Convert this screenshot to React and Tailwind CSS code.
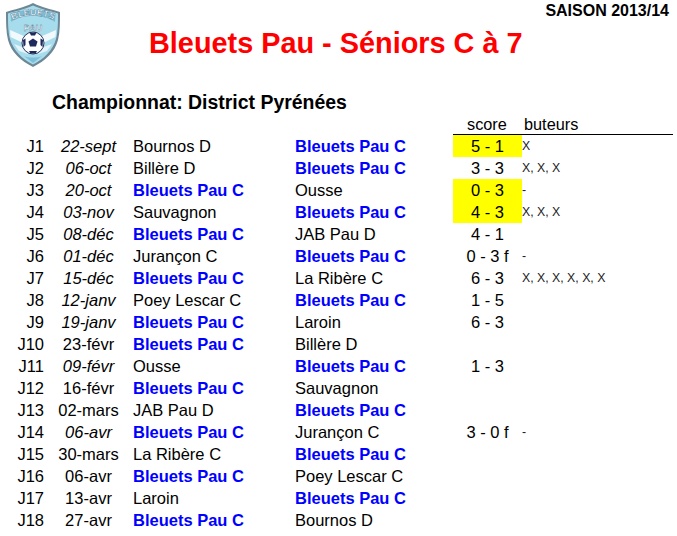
const rows = [
  ["J1","22-sept",1,"Bournos D","B","5 - 1",1,"X"],
  ["J2","06-oct",1,"Billère D","B","3 - 3",0,"X, X, X"],
  ["J3","20-oct",1,"B","Ousse","0 - 3",1,"-"],
  ["J4","03-nov",1,"Sauvagnon","B","4 - 3",1,"X, X, X"],
  ["J5","08-déc",1,"B","JAB Pau D","4 - 1",0,""],
  ["J6","01-déc",1,"Jurançon C","B","0 - 3 f",0,"-"],
  ["J7","15-déc",1,"B","La Ribère C","6 - 3",0,"X, X, X, X, X, X"],
  ["J8","12-janv",1,"Poey Lescar C","B","1 - 5",0,""],
  ["J9","19-janv",1,"B","Laroin","6 - 3",0,""],
  ["J10","23-févr",0,"B","Billère D","",0,""],
  ["J11","09-févr",1,"Ousse","B","1 - 3",0,""],
  ["J12","16-févr",0,"B","Sauvagnon","",0,""],
  ["J13","02-mars",0,"JAB Pau D","B","",0,""],
  ["J14","06-avr",1,"B","Jurançon C","3 - 0 f",0,"-"],
  ["J15","30-mars",0,"La Ribère C","B","",0,""],
  ["J16","06-avr",0,"B","Poey Lescar C","",0,""],
  ["J17","13-avr",0,"Laroin","B","",0,""],
  ["J18","27-avr",0,"B","Bournos D","",0,""],
];

function Team({ v }) {
  return v === "B" ? (
    <div className="font-bold text-[#0000ff]">Bleuets Pau C</div>
  ) : (
    <div>{v}</div>
  );
}

function Logo() {
  return (
    <svg width="56" height="66" viewBox="0 0 56 66" className="block">
      <path d="M28 1 C38 6 46 7 55 10 C55 20 55 30 53 38 C50 50 40 59 28 65 C16 59 6 50 3 38 C1 30 1 20 1 10 C10 7 18 6 28 1Z" fill="#6d8796" />
      <path d="M28 3.5 C38 8 45 9 53 11.5 C53 20 53 30 51 37 C48 48 39 57 28 62.5 C17 57 8 48 5 37 C3 30 3 20 3 11.5 C11 9 18 8 28 3.5Z" fill="#a6dcec" />
      <path d="M6 20 C18 12 38 12 50 20 L50.5 11 C38 7 18 7 5.5 11Z" fill="#7cbdd6" />
      <path id="bleuets-arc" d="M6 19 C18 11.5 38 11.5 50 19" fill="none" />
      <text fontSize="9" fontWeight="700" fontFamily="Liberation Sans, sans-serif" fill="#ffffff" stroke="#3f6a85" strokeWidth="0.35">
        <textPath href="#bleuets-arc" startOffset="50%" textAnchor="middle">BLEUETS</textPath>
      </text>
      <text x="28" y="29" textAnchor="middle" fontSize="9" fontWeight="700" fontFamily="Liberation Sans, sans-serif" fill="#ffffff" stroke="#3f6a85" strokeWidth="0.35">PAU</text>
      <path d="M5 28 L19 34 L18 41 L5.5 35Z M51 28 L37 34 L38 41 L50.5 35Z" fill="#f0f9fc" />
      <path d="M9 42 L20 46 L23 52 L14 49Z M47 42 L36 46 L33 52 L42 49Z" fill="#e4f4f9" />
      <path d="M19 54 C24 56 32 56 37 54 L28 61Z" fill="#7fc0d8" />
      <circle cx="28" cy="41" r="11" fill="#ffffff" stroke="#2a3560" strokeWidth="1" />
      <path d="M28 36.5 L32.5 39.5 L31 44.5 L25 44.5 L23.5 39.5Z" fill="#1f2a5c" />
      <path d="M24.5 30.5 L31.5 30.5 L30 33.5 L26 33.5Z M18 38 L20.5 36.5 L20.5 43 L18.5 45Z M38 38 L35.5 36.5 L35.5 43 L37.5 45Z M24 49 L32 49 L30.5 51.5 L25.5 51.5Z" fill="#1f2a5c" />
    </svg>
  );
}

export default function App() {
  return (
    <div className="relative w-[677px] h-[536px] bg-white text-black overflow-hidden font-['Liberation_Sans',Arial,sans-serif] text-[16.5px]">
      <div className="absolute left-[5px] top-[2px]"><Logo /></div>
      <div className="absolute right-[8px] top-[1px] text-[16px] leading-[20px] font-bold">SAISON 2013/14</div>

      <div className="pt-[24px] pl-[149px] h-[92px] text-[28.85px] leading-[38px] font-bold text-[#ff0000]">
        Bleuets Pau - Séniors C à 7
      </div>

      <div className="pl-[52px] h-[24px] text-[19.45px] leading-[21px] font-bold">Championnat: District Pyrénées</div>

      <div className="grid grid-cols-[453px_69px_151px] h-[19px] leading-[16px] text-[16.3px]">
        <div />
        <div className="border-b border-black pl-[14px]">score</div>
        <div className="border-b border-black pl-[2px]">buteurs</div>
      </div>

      <div className="flex flex-col">
        {rows.map((r) => (
          <div key={r[0]} className="grid grid-cols-[44px_89px_162px_158px_69px_1fr] grid-rows-[22px] h-[22px] leading-[22px]">
            <div className="text-right">{r[0]}</div>
            <div className={"text-center " + (r[2] ? "italic" : "")}>{r[1]}</div>
            <Team v={r[3]} />
            <Team v={r[4]} />
            <div className={"text-center " + (r[6] ? "bg-[#ffff00]" : "")}>{r[5]}</div>
            <div className="text-[12.3px] leading-[22px] text-[#222]">{r[7]}</div>
          </div>
        ))}
      </div>
    </div>
  );
}
